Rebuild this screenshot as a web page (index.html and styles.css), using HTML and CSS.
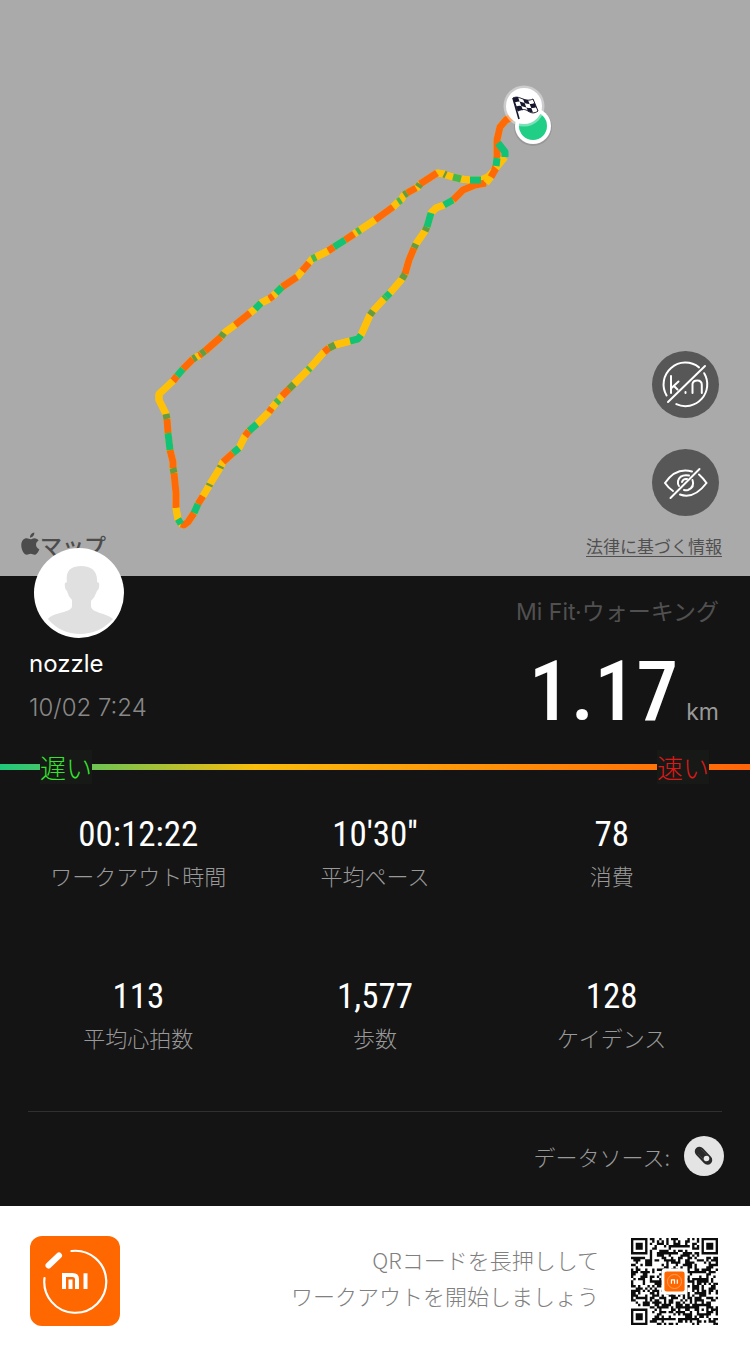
FILE: index.html
```html
<!DOCTYPE html>
<html lang="ja">
<head>
<meta charset="utf-8">
<meta name="viewport" content="width=device-width, initial-scale=1">
<title>Mi Fit ウォーキング</title>
<link rel="stylesheet" href="styles.css">
</head>
<body>
<main class="page">
  <section class="map">
    <svg class="map-canvas" viewBox="0 0 750 576" role="img" aria-label="ルート">
      <g id="route" class="route"></g>
      <circle cx="533" cy="127" r="19" fill="#000" opacity=".1"/>
      <circle cx="533" cy="126" r="18" fill="#fff"/>
      <circle cx="533" cy="126" r="14" fill="#20cf85"/>
      <circle cx="524" cy="106" r="20.500" fill="#fff" opacity=".4"/>
      <circle cx="524" cy="106" r="18" fill="#fff"/>
      <g transform="translate(513 97)">
        <path d="M0 1l6 21" stroke="#16162c" stroke-width="1.6" fill="none"/>
        <path d="M0 1c4-2 7 0 10 1s6 2 10 0l5 12c-4 3-7 2-10 0s-6-2-10 0z" fill="#fff" stroke="#16162c" stroke-width="1"/>
        <path d="M0 1q3-1.500 5-1l1.600 4.500q-2.500 0-5 .9zM10 2q3 1 5 1l1.600 4q-2.500 0-5-1zM6.600 4.500q2.500.5 5 1.500l1.700 4.500q-2.500-1-5-1.500zM16.600 7q2.500.3 5-.9l1.700 4.200q-2.500 1-5 .7zM3.300 9.500q2.500-1 5-.5l1.700 4.200q-2.500-.5-5 .8zM13.300 10.500q2.500.8 5 .5l1.700 4.500q-2.500 0-5-1.500z" fill="#16162c"/>
      </g>
    </svg>
    <div class="map-brand">
      <svg class="apple" viewBox="0 0 20 24" aria-hidden="true"><path d="M14 0c.3 2.800-1.900 5.300-4.400 5.300C9.200 2.700 11.500.3 14 0zM10 7c1.200 0 2.200-1.100 4.200-1.100 1.800 0 3.400 1 4.300 2.300-4 2.300-3.200 7.700.8 9.200-1 2.800-3 5.900-5 5.900-1.600 0-2.200-1-4.100-1s-2.600 1-4.100 1C3.200 23.300.3 17.800.3 13.200.3 8.700 3 6 5.900 6 7.700 6 9 7 10 7z" fill="currentColor"/></svg>
      <span>マップ</span>
    </div>
    <div class="map-tools">
      <button class="tool" type="button" aria-label="距離を隠す">
        <svg viewBox="0 0 67 67" aria-hidden="true" fill="none" stroke="#fff" stroke-width="2" stroke-linecap="round">
          <path d="M47 16.400A21.800 21.800 0 0 0 14.600 44.500M52.200 22.200A21.800 21.800 0 0 1 24.300 53.100"/>
          <path d="M16 51L53 15"/>
          <path d="M19 25v17M26.500 30.500l-7 6.500M22 35l3.500 3.500M33.500 41v1M40.500 42V33Q41 29.500 45.300 29.500Q49.800 29.500 49.800 34V42"/>
        </svg>
      </button>
      <button class="tool" type="button" aria-label="地図を隠す">
        <svg viewBox="0 0 67 67" aria-hidden="true" fill="none" stroke="#fff" stroke-width="2" stroke-linecap="round">
          <path d="M40 22.500Q24 18 13 34Q16.500 39 21 42M47 25.500Q51 29 54.500 34Q42 50.500 28 45.500"/>
          <path d="M37 26.500Q28 25 26 32Q25.500 35 27 37M40.500 31Q43 38 36 41Q34 41.500 32 41M35 30Q31 29.500 30 33"/>
          <path d="M18.500 49L47.500 20"/>
        </svg>
      </button>
    </div>
    <a class="legal" href="#legal">法律に基づく情報</a>
  </section>

  <section class="summary">
    <div class="user">
      <svg class="avatar" viewBox="0 0 90 90" role="img" aria-label="nozzle">
        <circle cx="45" cy="45" r="45" fill="#fff"/>
        <path d="M14 71C19 64 38 65 38 58V52Q34 48 33 43Q30 40 31 35L33 34C31 22 38 18 47 18S64 22 63 34L65 35Q66 40 63 43Q61 49 57 53V58C57 65 73 65 79 71C62 91 30 91 14 71Z" fill="#e0e0e0"/>
      </svg>
      <p class="name">nozzle</p>
      <p class="date">10/02 7:24</p>
    </div>
    <div class="result">
      <p class="activity">Mi Fit·ウォーキング</p>
      <p class="distance"><strong class="distance-value">1.17</strong><span class="unit">km</span></p>
    </div>
  </section>

  <div class="pace"><span class="pace-slow">遅い</span><span class="pace-fast">速い</span></div>

  <dl class="stats">
    <div class="stat"><dd>00:12:22</dd><dt>ワークアウト時間</dt></div>
    <div class="stat"><dd>10'30''</dd><dt>平均ペース</dt></div>
    <div class="stat"><dd>78</dd><dt>消費</dt></div>
    <div class="stat"><dd>113</dd><dt>平均心拍数</dt></div>
    <div class="stat"><dd>1,577</dd><dt>歩数</dt></div>
    <div class="stat"><dd>128</dd><dt>ケイデンス</dt></div>
  </dl>

  <div class="source">
    <span>データソース:</span>
    <svg class="source-icon" viewBox="0 0 40 40" role="img" aria-label="Mi Band">
      <circle cx="20" cy="20" r="20" fill="#e4e4e4"/>
      <path d="M15.500 15.500L23.500 24" stroke="#2b2b2b" stroke-width="9.500" stroke-linecap="round"/>
      <path d="M14 18L22 26M17 13L25 21" stroke="#4a4a4a" stroke-width=".7"/>
      <circle cx="22.500" cy="22.500" r="2.800" fill="#e9e9e9"/>
    </svg>
  </div>

  <footer class="promo">
    <svg class="logo" viewBox="0 0 90 90" role="img" aria-label="Mi Fit">
      <rect width="90" height="90" rx="12" fill="#ff6700"/>
      <path d="M41.500 15A31 31 0 1 1 14.500 42" fill="none" stroke="#fff" stroke-width="2.200" stroke-linecap="round"/>
      <path d="M18.500 29.500L29 19.500" stroke="#fff" stroke-width="6" stroke-linecap="round"/>
      <path d="M34 53V39H42.500Q47 39 47 43V53M40.500 43.500V53M55.500 37.200V53" fill="none" stroke="#fff" stroke-width="4"/>
    </svg>
    <p class="promo-text">QRコードを長押しして<br>ワークアウトを開始しましょう</p>
    <svg class="qr" viewBox="0 0 37 37" role="img" aria-label="QRコード">
      <path id="qr-modules" fill="#0c0c0c"/>
      <rect x="13" y="13" width="11" height="11" rx="1.500" fill="#fff"/>
      <rect x="14.200" y="14.200" width="8.600" height="8.600" rx="1" fill="#ff6700"/>
      <circle cx="18.500" cy="18.500" r="3" fill="none" stroke="#ffb488" stroke-width=".3"/>
      <path d="M17.200 19.500V17.800h1.300V19.500M19.700 17.600V19.500" fill="none" stroke="#fff" stroke-width=".5"/>
    </svg>
  </footer>
</main>
<script src="draw.js"></script>
</body>
</html>
```
FILE: styles.css
```css
* { box-sizing: border-box; }
body {
  margin: 0;
  background: #141414;
  color: #fff;
  font-family: Inter, "Noto Sans CJK JP", sans-serif;
}
p, dl, dd { margin: 0; }
svg { display: block; }

.map { position: relative; background: #aaa; }
.map-canvas { width: 100%; height: auto; }
.route { fill: none; stroke-width: 7; stroke-linejoin: round; }
.map-brand {
  position: absolute;
  left: 21px;
  bottom: 16px;
  display: flex;
  align-items: center;
  color: #4c4c4c;
  font: 500 22px/32px "Noto Sans CJK JP", sans-serif;
}
.apple { width: 19px; height: 24px; }
.map-tools {
  position: absolute;
  right: 31px;
  bottom: 60px;
  display: grid;
  gap: 31px;
}
.tool {
  width: 67px;
  height: 67px;
  padding: 0;
  border: 0;
  border-radius: 50%;
  background: #575757;
  cursor: pointer;
}
.legal {
  position: absolute;
  right: 28px;
  bottom: 18px;
  color: #505050;
  font: 400 17px/24px "Noto Sans CJK JP", sans-serif;
  text-underline-offset: 3px;
}

.summary {
  display: flex;
  justify-content: space-between;
  padding: 0 31px 0 29px;
}
.avatar {
  position: relative;
  width: 90px;
  height: 90px;
  margin: -28px 0 0 5px;
}
.name { margin-top: 8px; font-size: 24px; line-height: 36px; }
.date { margin-top: 8px; color: #888; font-size: 24px; font-weight: 300; line-height: 36px; }
.result { padding-top: 20px; text-align: right; }
.activity { color: #505050; font-size: 23px; line-height: 32px; }
.distance {
  display: flex;
  justify-content: flex-end;
  align-items: baseline;
  gap: 8px;
  margin-top: 16px;
}
.distance-value {
  font: 500 84px/96px "Roboto Condensed", "Liberation Sans Narrow", "Liberation Sans", sans-serif;
}
.unit { color: #999; font-size: 23px; line-height: 32px; }

.pace {
  display: flex;
  justify-content: space-between;
  margin-top: 10px;
  padding: 0 41px 0 40px;
  background: linear-gradient(90deg, #1fc77c, #f9bd0c 34%, #ff8a08 70%, #ff6408) center / 100% 6px no-repeat;
  font: 300 26px/34px "Noto Sans CJK JP", sans-serif;
}
.pace span { background: #171917; }
.pace-slow { color: #35e52d; }
.pace-fast { color: #dc1919; }

.stats {
  display: grid;
  grid-template-columns: repeat(3, 1fr);
  row-gap: 82px;
  padding: 30px 20px 55px;
  text-align: center;
}
.stat { display: flex; flex-direction: column; }
.stat dd {
  font: 400 35px/42px "Roboto Condensed", "Liberation Sans Narrow", "Liberation Sans", sans-serif;
}
.stat dt {
  color: #999;
  font: 300 22px/38px "Noto Sans CJK JP", sans-serif;
}

.source {
  display: flex;
  justify-content: flex-end;
  align-items: center;
  gap: 14px;
  margin: 0 28px;
  padding: 24px 0 30px;
  border-top: 1px solid #303030;
  color: #999;
  font: 300 22px/40px "Noto Sans CJK JP", sans-serif;
}
.source-icon { width: 40px; height: 40px; margin-right: -2px; }

.promo {
  display: flex;
  align-items: center;
  gap: 32px;
  padding: 30px 32px 30px 30px;
  background: #fff;
}
.logo { flex: none; width: 90px; height: 90px; }
.promo-text {
  flex: 1;
  padding-bottom: 8px;
  color: #808080;
  text-align: right;
  font: 300 22px/36px "Noto Sans CJK JP", sans-serif;
}
.qr { flex: none; width: 87px; height: 87px; }
```
FILE: draw.js
```js
const colors = { o: '#ff6a08', y: '#ffc107', g: '#12c277', d: '#669b42', m: '#45b94d' };

// Each entry is a pace colour and the point where that stretch ends.
const start = [512, 117];
const loop = [
  ['o', 506, 120], ['o', 500, 127], ['o', 497, 140], ['o', 497, 158], ['g', 496, 166],
  ['o', 494, 171], ['y', 488, 177], ['y', 481, 180], ['g', 470, 180], ['y', 461, 179],
  ['m', 453, 177], ['y', 446, 175], ['d', 444, 174], ['y', 437, 173], ['o', 420, 184],
  ['d', 418, 187], ['y', 416, 188], ['o', 407, 193], ['d', 404, 195], ['y', 401, 200],
  ['m', 398, 202], ['y', 393, 207], ['o', 375, 220], ['y', 360, 230], ['m', 357, 232],
  ['y', 354, 234], ['o', 345, 240], ['g', 334, 247], ['o', 328, 251], ['y', 316, 257],
  ['m', 312, 259], ['y', 309, 263], ['o', 302, 271], ['y', 297, 277], ['o', 282, 287],
  ['g', 276, 293], ['y', 273, 296], ['o', 269, 299], ['y', 261, 303], ['g', 255, 309],
  ['y', 250, 313], ['o', 235, 325], ['y', 224, 333], ['d', 221, 337], ['o', 205, 351],
  ['d', 201, 354], ['o', 199, 356], ['y', 196, 357], ['d', 193, 359], ['o', 183, 369],
  ['g', 177, 376], ['o', 173, 381], ['y', 159, 394], ['y', 159, 400], ['y', 166, 414],
  ['d', 167, 419], ['o', 168, 433], ['g', 170, 450], ['o', 173, 462], ['o', 173, 468],
  ['d', 174, 473], ['o', 176, 493], ['o', 176, 508], ['y', 178, 519], ['g', 181, 524],
  ['o', 184, 525], ['o', 188, 522], ['o', 194, 513], ['g', 198, 504], ['o', 203, 496],
  ['y', 209, 486], ['d', 210, 484], ['y', 220, 468], ['d', 221, 466], ['y', 223, 462],
  ['o', 233, 453], ['g', 239, 448], ['y', 245, 436], ['o', 249, 431], ['g', 257, 424],
  ['y', 269, 412], ['o', 272, 408], ['y', 276, 403], ['m', 279, 400], ['y', 282, 396],
  ['o', 289, 389], ['d', 294, 384], ['y', 308, 370], ['m', 310, 368], ['y', 324, 352],
  ['o', 329, 348], ['d', 335, 345], ['y', 350, 341], ['g', 358, 339], ['g', 361, 335],
  ['y', 370, 315], ['d', 373, 311], ['y', 384, 299], ['m', 386, 297],
  ['g', 390, 293], ['y', 402, 279], ['d', 405, 274], ['o', 409, 260], ['o', 414, 248],
  ['d', 416, 244], ['y', 425, 231], ['d', 427, 227], ['g', 431, 213], ['y', 436, 208],
  ['y', 444, 205], ['g', 453, 200], ['o', 463, 190], ['o', 475, 185], ['o', 486, 183],
  ['y', 491, 177], ['o', 496, 168], ['y', 505, 157], ['g', 505, 152], ['g', 498, 143]
];

const svgNs = 'http://www.w3.org/2000/svg';
const route = document.getElementById('route');

function addLine(key, d) {
  const path = document.createElementNS(svgNs, 'path');
  path.setAttribute('d', d);
  path.setAttribute('stroke', colors[key]);
  route.append(path);
}

function drawRoute() {
  const runs = [];
  let from = start;
  for (const [key, x, y] of loop) {
    const last = runs[runs.length - 1];
    if (last && last.key === key) last.d += `L${x} ${y}`;
    else runs.push({ key, d: `M${from[0]} ${from[1]}L${x} ${y}` });
    from = [x, y];
  }
  // A continuous line below closes the wedges between stretches.
  addLine('y', `M${start}` + loop.slice(0, -5).map(([, x, y]) => `L${x} ${y}`).join(''));
  for (const group of ['yo', 'gmd']) {
    for (const run of runs) if (group.includes(run.key)) addLine(run.key, run.d);
  }
}

function drawCode() {
  const size = 37;
  let seed = 7331;
  const random = () => (seed = (seed * 1103515245 + 12345) % 2147483648) / 2147483648;
  const finder = (x, y, left, top) => {
    const dx = Math.abs(x - left - 3);
    const dy = Math.abs(y - top - 3);
    const ring = Math.max(dx, dy);
    return ring > 4 ? null : ring === 3 || ring < 2;
  };
  let d = '';
  for (let y = 0; y < size; y++) {
    for (let x = 0; x < size; x++) {
      let dark = random() > 0.48;
      for (const [left, top] of [[0, 0], [size - 7, 0], [0, size - 7]]) {
        const mark = finder(x, y, left, top);
        if (mark !== null) dark = mark;
      }
      const ring = Math.max(Math.abs(x - 30), Math.abs(y - 30));
      if (ring < 3) dark = ring !== 1;
      if (dark) d += `M${x} ${y}h1v1h-1z`;
    }
  }
  document.getElementById('qr-modules').setAttribute('d', d);
}

drawRoute();
drawCode();
```
